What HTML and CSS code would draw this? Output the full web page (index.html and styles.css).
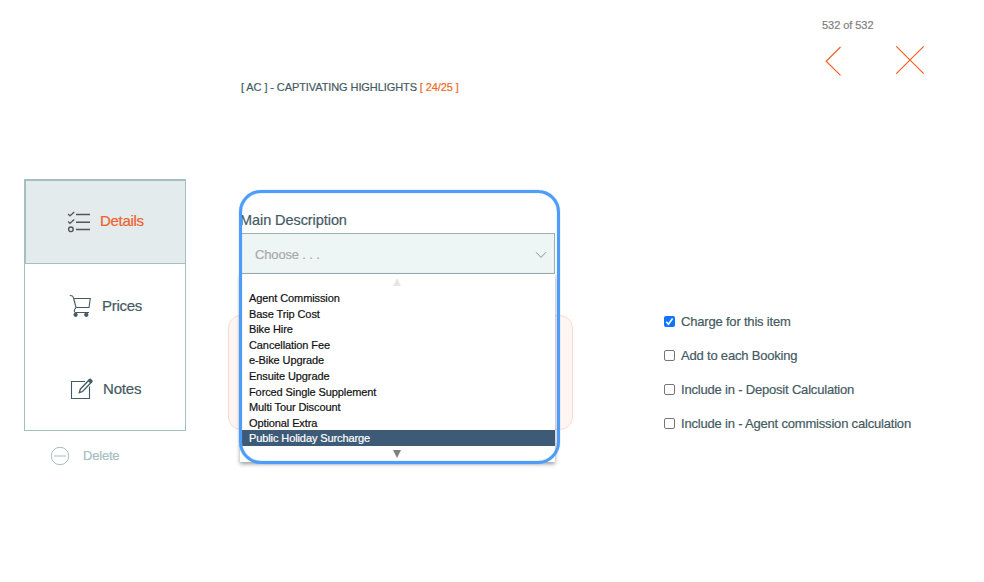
FILE: index.html
```html
<!DOCTYPE html>
<html lang="en">
  <head>
    <meta charset="UTF-8" />
    <meta name="viewport" content="width=device-width, initial-scale=1.0" />
    <title>Captivating Highlights</title>
    <link rel="stylesheet" href="styles.css">
  </head>
  <body>
    <header>
      <h1>[ AC ] - CAPTIVATING HIGHLIGHTS <span>[ 24/25 ]</span></h1>
      <div class="pager">
        <p>532 of 532</p>
        <div class="pager-icons">
          <svg class="back" width="18" height="30" viewBox="0 0 18 30"><path d="M16.5 1 2.2 15.2 16.5 29.4" /></svg>
          <svg width="30" height="30" viewBox="0 0 30 30"><path d="M1.3 1.3 28.7 28.7M28.7 1.3 1.3 28.7" /></svg>
        </div>
      </div>
    </header>

    <main>
      <aside>
        <nav>
          <a class="tab active">
            <svg class="icon-list" width="24" height="22" viewBox="0 0 24 22">
              <path class="line" d="M9 3.5H23M9 11.3H23M9 18.5H23" />
              <path class="mark" d="M1.2 3.1 3 4.9 7.2 1M1.2 10.6 3 12.4 7.2 8.5" />
              <circle class="mark" cx="3.9" cy="18.3" r="2.3" />
            </svg>
            <span>Details</span>
          </a>
          <a class="tab prices">
            <svg width="23" height="24" viewBox="0 0 23 24">
              <path d="M0.8 1.5C4 1.5 4 2.5 4.8 5L7 13.5 5.6 15.5C4.8 17.2 5.4 18.5 7 18.5H20M4.6 4.5H21.3L20 13.5H7" />
              <circle class="dot" cx="6.6" cy="20.8" r="1.6" />
              <circle class="dot" cx="17.3" cy="20.8" r="1.6" />
            </svg>
            <span>Prices</span>
          </a>
          <a class="tab notes">
            <svg width="23" height="22" viewBox="0 0 23 22">
              <path d="M15 3.5H1.5V20.5H19.5V8.5" />
              <path class="pencil" d="M9.3 14.7 10.3 11.2 19.3 1.7 21.6 4 12.6 13.5Z" />
              <path class="dot" d="M18.4 2.6 20.2 1 22.3 3 20.6 4.9Z" />
            </svg>
            <span>Notes</span>
          </a>
        </nav>
        <a class="delete">
          <svg width="20" height="20" viewBox="0 0 20 20"><circle cx="10" cy="10" r="8.7" /><path d="M4 10H16" /></svg>
          <span>Delete</span>
        </a>
      </aside>

      <section>
        <div class="field">
          <label>Main Description</label>
          <div class="select">
            <span>Choose . . .</span>
            <svg width="12" height="8" viewBox="0 0 12 8"><path d="M1 1.2 6 6.4 11 1.2" /></svg>
          </div>
          <div class="menu">
            <svg class="scroll" width="8" height="8" viewBox="0 0 8 8"><path d="M0 8H8L4 0Z" fill="#e6e6e6" /></svg>
            <ul>
              <li>Agent Commission</li>
              <li>Base Trip Cost</li>
              <li>Bike Hire</li>
              <li>Cancellation Fee</li>
              <li>e-Bike Upgrade</li>
              <li>Ensuite Upgrade</li>
              <li>Forced Single Supplement</li>
              <li>Multi Tour Discount</li>
              <li>Optional Extra</li>
              <li class="selected">Public Holiday Surcharge</li>
            </ul>
            <svg class="scroll" width="8" height="8" viewBox="0 0 8 8"><path d="M0 0H8L4 8Z" fill="#808080" /></svg>
          </div>
          <div class="ring"></div>
        </div>
        <div class="panel"></div>
      </section>

      <form>
        <label><span class="box checked"><svg width="11" height="11" viewBox="0 0 11 11"><path d="M2.3 5.8 4.4 8.2 8.6 2.5" /></svg></span>Charge for this item</label>
        <label><span class="box"></span>Add to each Booking</label>
        <label><span class="box"></span>Include in - Deposit Calculation</label>
        <label><span class="box"></span>Include in - Agent commission calculation</label>
      </form>
    </main>
  </body>
</html>
```

FILE: styles.css
```css
* {
  box-sizing: border-box;
}
body {
  margin: 0;
  height: 582px;
  overflow: hidden;
  background: #fff;
  color: #455a64;
  font-family: "Liberation Sans", Arial, sans-serif;
  -webkit-text-stroke: 0.2px;
}
svg {
  display: block;
  fill: none;
  flex-shrink: 0;
}
header {
  display: flex;
  height: 179px;
}
h1 {
  margin: 0;
  padding: 80px 0 0 241px;
  width: 822px;
  font-size: 11px;
  line-height: 14px;
  font-weight: normal;
  letter-spacing: -0.09px;
}
h1 span {
  color: #f4691e;
}
.pager p {
  margin: 0;
  padding-top: 18px;
  color: #808080;
  font-size: 11px;
  line-height: 14px;
  letter-spacing: -0.05px;
}
.pager-icons {
  display: flex;
  gap: 53px;
  margin: 13px 0 0 2px;
}
.pager-icons svg {
  stroke: #f26122;
  stroke-width: 1.2;
}
.pager-icons .back {
  margin-top: 1px;
}

main {
  display: flex;
  align-items: flex-start;
}
aside {
  width: 162px;
  margin-left: 24px;
}
nav {
  height: 252px;
  border: 1px solid #a4bec1;
}
.tab {
  display: flex;
  align-items: center;
  height: 83px;
  padding-left: 44px;
  gap: 10px;
  font-size: 15px;
  letter-spacing: -0.3px;
}
.tab svg {
  stroke: #455a64;
  stroke-width: 1.1;
}
.tab .dot {
  fill: #455a64;
}
.tab.notes {
  padding-left: 45px;
  letter-spacing: -0.2px;
}
.tab .pencil {
  fill: #fff;
  stroke-width: 1.3;
}
.tab.active {
  height: 84px;
  padding-left: 41px;
  gap: 9px;
  background: #e3ebec;
  border: 1px solid #a4bec1;
  border-right: none;
  color: #f2602a;
}
.tab.active span {
  margin-top: -3px;
}
.tab.active svg {
  stroke: #555;
  stroke-width: 1.4;
}
.delete {
  display: flex;
  align-items: center;
  gap: 13px;
  margin: 15px 0 0 26px;
  color: #a4bec1;
  font-size: 13px;
  letter-spacing: -0.2px;
}
.delete span {
  margin-top: -2px;
}
.delete svg {
  stroke: #a4bec1;
}

section {
  width: 345px;
  margin-left: 42px;
}
.field {
  position: relative;
  height: 136px;
  padding: 32px 18px 0 12px;
}
.field label {
  display: block;
  height: 22px;
  font-size: 14.5px;
  line-height: 18px;
  letter-spacing: -0.07px;
}
.select {
  display: flex;
  align-items: center;
  justify-content: space-between;
  height: 41px;
  padding: 1px 7px 0 14px;
  background: #eef6f5;
  border: 1px solid #98b1b4;
  color: #a9a9a9;
  font-size: 13px;
  letter-spacing: -0.15px;
}
.select svg {
  margin-top: 2px;
  stroke: #7d9a9f;
}
.menu {
  position: absolute;
  z-index: 2;
  top: 95px;
  left: 12px;
  width: 315px;
  height: 188px;
  padding-top: 4px;
  background: #fff;
  box-shadow: 0 2px 4px rgba(0, 0, 0, 0.4);
  color: #111;
}
.menu ul {
  margin: 4px 0;
  padding: 0;
  list-style: none;
}
.menu li {
  height: 15.6px;
  padding-left: 9px;
  font-size: 11px;
  line-height: 16px;
  letter-spacing: -0.1px;
}
.menu .selected {
  background: #3d5a76;
  color: #fff;
}
.scroll {
  margin: 0 0 0 153px;
}
.ring {
  position: absolute;
  z-index: 3;
  top: 11px;
  left: 11px;
  width: 321px;
  height: 274px;
  border: 3px solid #4d9df8;
  border-radius: 22px;
  box-shadow: 0 0 1px #4d9df8, inset 0 0 1px #4d9df8;
}
.panel {
  height: 115px;
  background: #fff6f3;
  border: 1px solid #fddacf;
  border-radius: 13px;
}

form {
  display: flex;
  flex-direction: column;
  gap: 18.3px;
  margin: 134px 0 0 91px;
}
form label {
  display: flex;
  align-items: center;
  height: 16px;
  gap: 6px;
  font-size: 13px;
  letter-spacing: -0.19px;
}
.box {
  width: 11px;
  height: 11px;
  border: 1px solid #767676;
  border-radius: 2px;
}
.box.checked {
  margin-top: 1px;
  border: none;
  background: #0f75ff;
}
.box svg {
  stroke: #fff;
  stroke-width: 1.6;
}
```
